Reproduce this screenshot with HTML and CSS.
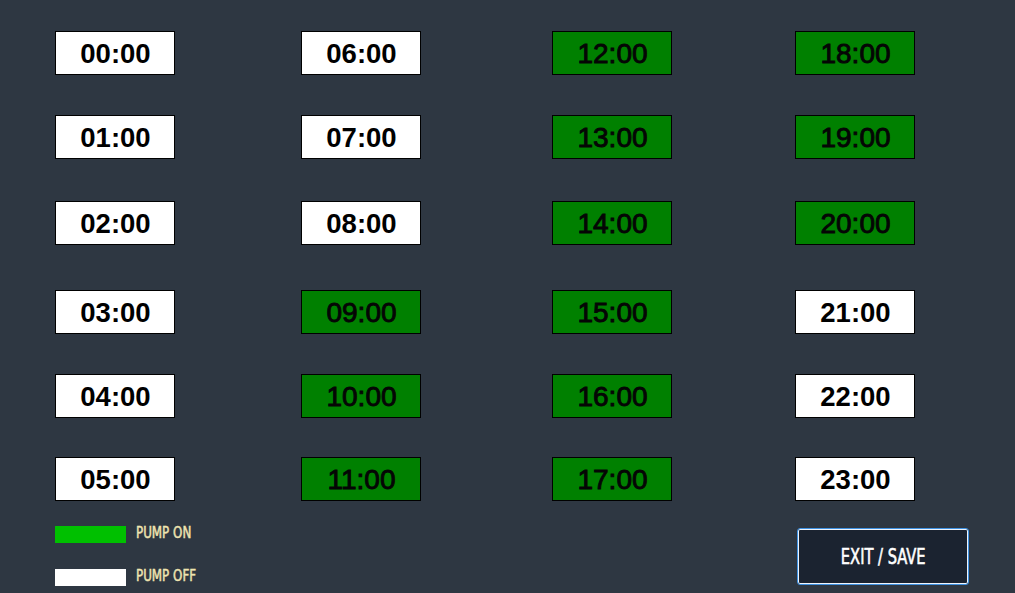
FILE: index.html
```html
<!DOCTYPE html>
<html>
<head>
<meta charset="utf-8">
<link rel="stylesheet" href="styles.css">
</head>
<body>
<div class="page">
  <div class="grid">
    <div class="slot off">00:00</div>
    <div class="slot off">06:00</div>
    <div class="slot on">12:00</div>
    <div class="slot on">18:00</div>

    <div class="slot off">01:00</div>
    <div class="slot off">07:00</div>
    <div class="slot on">13:00</div>
    <div class="slot on">19:00</div>

    <div class="slot off">02:00</div>
    <div class="slot off">08:00</div>
    <div class="slot on">14:00</div>
    <div class="slot on">20:00</div>

    <div class="slot off">03:00</div>
    <div class="slot on">09:00</div>
    <div class="slot on">15:00</div>
    <div class="slot off">21:00</div>

    <div class="slot off">04:00</div>
    <div class="slot on">10:00</div>
    <div class="slot on">16:00</div>
    <div class="slot off">22:00</div>

    <div class="slot off">05:00</div>
    <div class="slot on">11:00</div>
    <div class="slot on">17:00</div>
    <div class="slot off">23:00</div>
  </div>
  <div class="footer">
    <div class="legend">
      <div class="legend-item">
        <span class="swatch swatch-on"></span>
        <span class="legend-label">PUMP ON</span>
      </div>
      <div class="legend-item">
        <span class="swatch swatch-off"></span>
        <span class="legend-label">PUMP OFF</span>
      </div>
    </div>
    <button class="exit-btn"><span class="exit-label">EXIT / SAVE</span></button>
  </div>
</div>
</body>
</html>
```

FILE: styles.css
```css
html, body {
  margin: 0;
  padding: 0;
  background: #2e3742;
  width: 1015px;
  height: 593px;
  overflow: hidden;
}

.page {
  padding: 31px 0 0 55px;
}

.grid {
  display: grid;
  grid-template-columns: 246px 251px 243px 120px;
  grid-template-rows: 84px 86px 89px 84px 83px 44px;
  align-items: start;
}

.slot {
  box-sizing: border-box;
  width: 120px;
  height: 44px;
  border: 1px solid #000;
  display: flex;
  align-items: center;
  justify-content: center;
  font-family: "Liberation Sans", Arial, sans-serif;
  color: #000;
  padding-top: 1px;
  padding-left: 1px;
}

.slot.off {
  background: #ffffff;
  font-weight: 700;
  font-size: 27.5px;
}

.slot.on {
  background: #008000;
  font-weight: 400;
  font-size: 28px;
  color: #050505;
  -webkit-text-stroke: 0.9px #050505;
}

.footer {
  display: flex;
  justify-content: space-between;
  width: 914px;
  padding-top: 25px;
}

.legend {
  display: flex;
  flex-direction: column;
  gap: 26px;
}

.legend-item {
  display: flex;
  align-items: center;
  height: 17px;
}

.swatch {
  display: block;
  width: 71px;
  height: 17px;
}

.swatch-on {
  background: #00c000;
}

.swatch-off {
  background: #ffffff;
}

.legend-label {
  display: inline-block;
  margin-left: 10px;
  font-family: "DejaVu Sans Condensed", "DejaVu Sans", sans-serif;
  font-stretch: condensed;
  font-weight: 400;
  font-size: 16.5px;
  color: #efe4b0;
  -webkit-text-stroke: 0.5px #efe4b0;
  transform: scaleX(0.8);
  transform-origin: left center;
  white-space: nowrap;
  position: relative;
  top: -2px;
}

.exit-btn {
  box-sizing: border-box;
  width: 172px;
  height: 57px;
  margin-top: 2px;
  background: #1b2330;
  border: 1px solid #3f92e2;
  box-shadow: inset 0 0 0 1px #eef4fc;
  border-radius: 3px;
  display: flex;
  align-items: center;
  justify-content: center;
  padding: 0;
  cursor: pointer;
}

.exit-label {
  display: inline-block;
  font-family: "DejaVu Sans Condensed", "DejaVu Sans", sans-serif;
  font-stretch: condensed;
  font-weight: 400;
  font-size: 22px;
  color: #ffffff;
  -webkit-text-stroke: 0.6px #ffffff;
  transform: scaleX(0.74);
  white-space: nowrap;
}
```
